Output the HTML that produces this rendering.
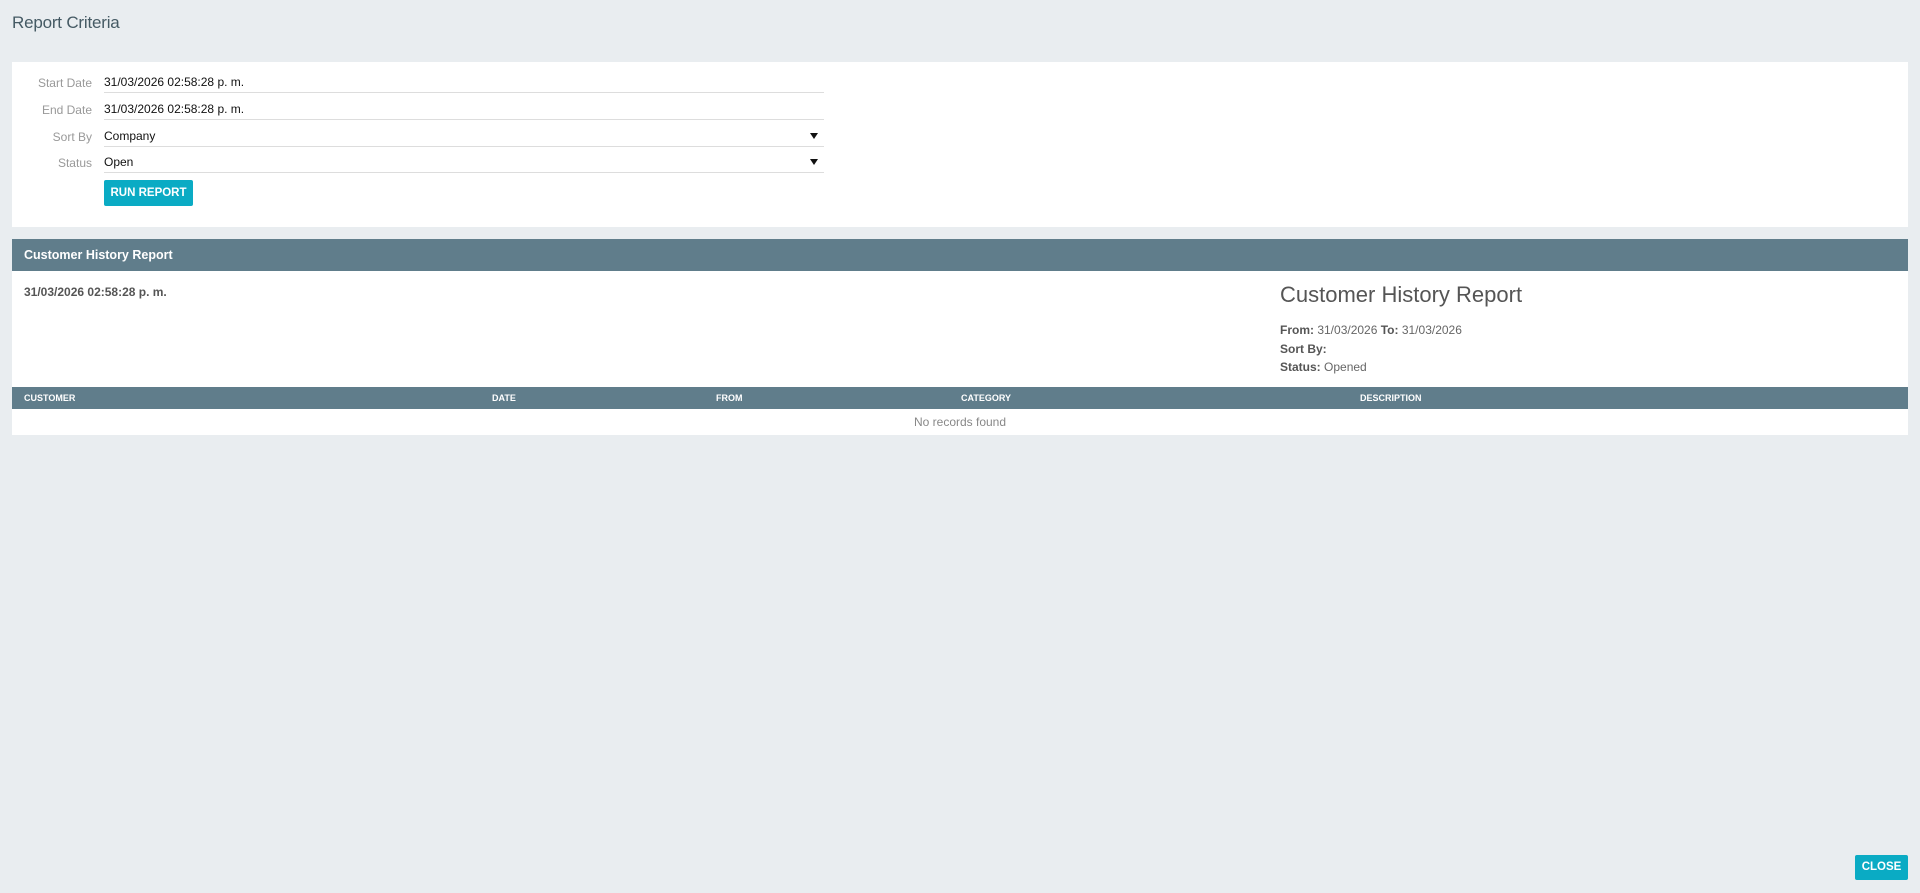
<!DOCTYPE html>
<html><head><meta charset="utf-8"><style>
*{margin:0;padding:0;box-sizing:border-box}
body{width:1920px;height:893px;background:#e9edf0;font-family:"Liberation Sans",sans-serif;position:relative;overflow:hidden;color:#555}
.abs{position:absolute}
.title{left:12px;top:13px;font-size:17px;color:#455a64;letter-spacing:-0.2px}
.p1{left:12px;top:62px;width:1896px;height:165px;background:#fff}
.lbl{width:80px;text-align:right;font-size:12px;color:#999;left:12px}
.inp{left:104px;width:720px;border-bottom:1px solid #ddd;font-size:12px;color:#111;height:20px;line-height:18px}
.arr{position:absolute;right:6px;top:6px;width:0;height:0;border-left:4.5px solid transparent;border-right:4.5px solid transparent;border-top:6px solid #111}
.btn{background:#0aabc4;color:#fff;font-weight:bold;font-size:11.5px;text-align:center;border-radius:2px}
.hdr{left:12px;top:239px;width:1896px;height:32px;background:#607d8b;color:#fff;font-weight:bold;font-size:12.5px;line-height:32px;padding-left:12px}
.p2{left:12px;top:271px;width:1896px;height:164px;background:#fff}
.th{left:12px;top:387px;width:1896px;height:22px;background:#607d8b}
.th span{position:absolute;top:0;line-height:22px;font-size:9px;font-weight:bold;color:#fff}
</style></head><body>
<div class="abs title">Report Criteria</div>
<div class="abs p1"></div>
<div class="abs lbl" style="top:76px">Start Date</div>
<div class="abs inp" style="top:73px">31/03/2026 02:58:28 p. m.</div>
<div class="abs lbl" style="top:103px">End Date</div>
<div class="abs inp" style="top:100px">31/03/2026 02:58:28 p. m.</div>
<div class="abs lbl" style="top:130px">Sort By</div>
<div class="abs inp" style="top:127px">Company<i class="arr"></i></div>
<div class="abs lbl" style="top:156px">Status</div>
<div class="abs inp" style="top:153px">Open<i class="arr"></i></div>
<div class="abs btn" style="left:104px;top:180px;width:89px;height:26px;line-height:26px">RUN REPORT</div>
<div class="abs hdr">Customer History Report</div>
<div class="abs p2"></div>
<div class="abs" style="left:24px;top:285px;font-size:12px;font-weight:bold;color:#555">31/03/2026 02:58:28 p. m.</div>
<div class="abs" style="left:1280px;top:282px;font-size:22px;color:#555">Customer History Report</div>
<div class="abs" style="left:1280px;top:321px;font-size:12px;line-height:18.5px;color:#666"><b style="color:#555">From:</b> 31/03/2026 <b style="color:#555">To:</b> 31/03/2026<br><b style="color:#555">Sort By:</b><br><b style="color:#555">Status:</b> Opened</div>
<div class="abs th"><span style="left:12px">CUSTOMER</span><span style="left:480px">DATE</span><span style="left:704px">FROM</span><span style="left:949px">CATEGORY</span><span style="left:1348px">DESCRIPTION</span></div>
<div class="abs" style="left:12px;width:1896px;top:415px;text-align:center;font-size:12px;color:#888">No records found</div>
<div class="abs btn" style="left:1855px;top:855px;width:53px;height:25px;line-height:25px">CLOSE</div>
</body></html>
